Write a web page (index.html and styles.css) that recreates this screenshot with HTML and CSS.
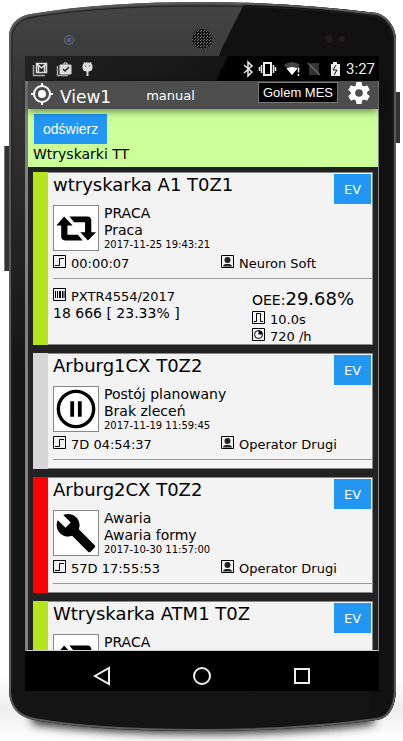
FILE: index.html
```html
<!DOCTYPE html>
<html lang="pl">
<head>
    <meta charset="UTF-8">
    <meta name="viewport" content="width=device-width, initial-scale=1.0">
    <title>Golem MES - View1</title>
    <link rel="stylesheet" href="styles.css">
</head>
<body>
    <!-- shared icons -->
    <svg class="defs" aria-hidden="true">
        <symbol id="repeat" viewBox="0 0 44 44">
            <path d="M9.500 10 L1.500 19.500 H6.500 V31 Q6.500 35 10.500 35 H29 L24 29 H13 V19.500 H18.500 Z"/>
            <path d="M34.500 35 L43 26.500 H38 V14 Q38 10 34 10 H15 L20 16 H31.500 V26.500 H26.500 Z"/>
        </symbol>
        <symbol id="pause" viewBox="0 0 44 44">
            <circle cx="22" cy="22" r="18.500" fill="none" stroke="#000" stroke-width="3.500"/>
            <path d="M16 14h4v16h-4zM24 14h4v16h-4z"/>
        </symbol>
        <symbol id="wrench" viewBox="0 0 24 24">
            <path d="M22.700 19l-9.100-9.100c.9-2.300.4-5-1.500-6.900-2-2-5-2.400-7.400-1.300L9 6 6 9 1.600 4.700C.4 7.100.9 10.100 2.900 12.100c1.900 1.900 4.600 2.400 6.900 1.500l9.100 9.100c.4.400 1 .4 1.400 0l2.300-2.300c.5-.4.5-1.100.1-1.400z"/>
        </symbol>
        <symbol id="step" viewBox="0 0 13 13">
            <path d="M.5.5h12v12H.5zM2 10.500h4.500v-7H11" fill="none" stroke="#000"/>
        </symbol>
        <symbol id="user" viewBox="0 0 13 13">
            <path d="M.5.5h12v12H.5z" fill="none" stroke="#000"/>
            <circle cx="6.500" cy="5" r="3" fill="#222"/>
            <path d="M2 11.500c0-2 2-2.500 4.500-2.500s4.500.5 4.500 2.500z" fill="#222"/>
        </symbol>
        <symbol id="barcode" viewBox="0 0 13 13">
            <path d="M.5.5h12v12H.5z" fill="none" stroke="#000"/>
            <path d="M2 3h1v7H2zM4 3h1v7H4zM6 3h2v7H6zM9 3h1v7H9zM10.500 3h1v7h-1z"/>
        </symbol>
        <symbol id="pulse" viewBox="0 0 13 13">
            <path d="M.5.5h12v12H.5zM2 10.500h2.500v-8h4v8H11" fill="none" stroke="#000"/>
        </symbol>
        <symbol id="clock" viewBox="0 0 13 13">
            <path d="M.5.5h12v12H.5z" fill="none" stroke="#000"/>
            <circle cx="6.500" cy="6.500" r="4" fill="none" stroke="#000"/>
            <path d="M6.500 6.500V2.500a4 4 0 0 1 4 4z"/>
        </symbol>
    </svg>

    <div class="phone">
        <svg class="case" viewBox="0 0 403 741" preserveAspectRatio="none" aria-hidden="true">
            <defs>
                <linearGradient id="body" x1="0" y1="0" x2="0" y2="1">
                    <stop offset="0" stop-color="#454545"/>
                    <stop offset="0.1" stop-color="#383838"/>
                    <stop offset="0.3" stop-color="#252525"/>
                    <stop offset="0.5" stop-color="#151515"/>
                    <stop offset="1" stop-color="#141414"/>
                </linearGradient>
                <linearGradient id="side" x1="0" y1="0" x2="0" y2="1">
                    <stop offset="0" stop-color="#fff"/>
                    <stop offset="0.5" stop-color="#eee"/>
                    <stop offset="1" stop-color="#fff"/>
                </linearGradient>
                <filter id="soft" x="-10%" y="-50%" width="120%" height="200%">
                    <feGaussianBlur stdDeviation="5"/>
                </filter>
                <pattern id="mesh" width="3" height="3" patternUnits="userSpaceOnUse">
                    <path d="M0 0h3v3H0z" fill="#151515"/>
                    <path d="M0 0h1v1H0zM2 1h1v1H2z" fill="#777"/>
                </pattern>
                <clipPath id="outline">
                    <path d="M9 37 C9 22 22 15 31 14 C85 5 140 2 202 2 C262 2 318 6 377 13 C387 16 396 27 396 40 V690 C395 711 387 719 376 720 C318 728 262 731 202 731 C140 731 85 729 34 720 C18 717 9 706 9 690 Z"/>
                </clipPath>
            </defs>
            <path d="M0 676h403v65H0z" fill="url(#side)"/>
            <path d="M32 700H374V724Q300 734 202 734T32 724z" fill="#333" filter="url(#soft)"/>
            <path d="M4 146h6v125H4zM395 92h5v51h-5z" fill="#333"/>
            <path d="M4 146h1v125H4z" fill="#777"/>
            <g clip-path="url(#outline)">
                <path d="M0 0h403v741H0z" fill="url(#body)"/>
                <path d="M246 0H403V741H370V300L378 81H211L221 50z" fill="#111"/>
            </g>
            <path d="M10 690V37 C10 23 22 16 31 15 C85 6 140 3 202 3 C262 3 318 7 377 14 C387 17 395 28 395 40 V690 C394 710 387 718 376 719 C318 727 262 730 202 730 C140 730 85 728 34 719 C18 716 10 706 10 690Z" fill="none" stroke="#5a5a5a" stroke-width="2"/>
            <path d="M12 690V37 C12 26 22 19 33 17 C85 9 140 6 202 6 C262 6 318 9 375 16 C386 19 393 30 393 40 V690" fill="none" stroke="#222"/>
            <circle cx="69" cy="40" r="5" fill="#666"/>
            <circle cx="69" cy="40" r="4" fill="#444450"/>
            <circle cx="69" cy="40" r="2" fill="#5558a0"/>
            <circle cx="202" cy="39" r="10" fill="url(#mesh)"/>
            <circle cx="329" cy="39" r="4" fill="#211b1d"/>
            <circle cx="342" cy="39" r="3" fill="#241a1d"/>
        </svg>

        <div class="statusbar">
            <svg width="70" height="24" viewBox="0 0 70 24" fill="none" stroke="#ddd" aria-hidden="true">
                <path d="M1.500 8v10.500H13" stroke="#aaa" stroke-width="1.500"/>
                <path d="M4.500 6.500h10v9h-10zM5 7l4.500 4L14 7M6.500 15V9M12.500 15V9" stroke-width="1.500"/>
                <path d="M25.500 9v9.500H36" stroke="#aaa" stroke-width="1.500"/>
                <path d="M28 8h11v9H28z" fill="#ddd"/>
                <path d="M32 8V6h3v2"/>
                <path d="M31 12l2 2 4-4" stroke="#222" stroke-width="1.500"/>
                <path d="M51 9q0-3 3-3h3q3 0 3 3v2q0 3-3 3h-3q-3 0-3-3z" fill="#ddd"/>
                <path d="M52 5l1 2M59 5l-1 2"/>
                <path d="M55.500 14v5" stroke-width="2"/>
                <path d="M53 9h1M57 9h1" stroke="#222"/>
            </svg>
            <svg class="status-right" width="98" height="24" viewBox="0 0 98 24" fill="none" stroke="#eee" aria-hidden="true">
                <path d="M1 8l8 7-4 4V5l4 4-8 7" stroke-width="1.500"/>
                <path d="M21 6h7v12h-7z" stroke-width="2"/>
                <path d="M18.500 8v8M16.500 10v4M30.500 8v8M32.500 10v4" stroke-width="1.500"/>
                <path d="M41 8q8-6 16 0l-8 10z" fill="#444" stroke="none"/>
                <path d="M43.500 11.500q5.500-3 11 0L49 18z" fill="#fff" stroke="none"/>
                <path d="M55.500 10.500v5M55.500 17v2" stroke-width="1.500"/>
                <path d="M68 6h8v12H66V9z" fill="#333" stroke="none"/>
                <path d="M65 6l12 12" stroke="#666" stroke-width="1.500"/>
                <path d="M88 7h2V5h4v2h3v12h-9z" fill="#eee" stroke="none"/>
                <path d="M93 8l-3 5h4l-3 5" stroke="#111"/>
            </svg>
            <span class="time">3:27</span>
        </div>

        <div class="app">
            <div class="topbar">
                <svg width="24" height="24" viewBox="0 0 24 24" aria-hidden="true">
                    <circle cx="12" cy="13" r="8" fill="none" stroke="#fff" stroke-width="2"/>
                    <circle cx="12" cy="13" r="4" fill="#fff"/>
                    <path d="M12 2v4M12 20v4M1 13h4M19 13h4" stroke="#fff" stroke-width="2"/>
                </svg>
                <h1>View1</h1>
                <span class="mode">manual</span>
                <span class="brand">Golem MES</span>
                <button class="settings" aria-label="Ustawienia">
                    <svg width="24" height="24" viewBox="1 1 22 22" fill="#fff" aria-hidden="true">
                        <path d="M19.430 12.980c.04-.32.070-.64.070-.98s-.03-.66-.07-.98l2.110-1.650c.19-.15.240-.42.120-.64l-2-3.460c-.12-.22-.39-.3-.61-.22l-2.490 1c-.52-.4-1.080-.73-1.690-.98l-.38-2.650C14.460 2.180 14.250 2 14 2h-4c-.25 0-.46.180-.49.420l-.38 2.650c-.61.250-1.170.590-1.690.980l-2.490-1c-.23-.09-.49 0-.61.220l-2 3.460c-.13.220-.07.490.120.640l2.110 1.650c-.04.320-.07.650-.07.980s.03.660.070.980l-2.110 1.650c-.19.150-.24.420-.12.640l2 3.460c.12.220.390.300.610.220l2.490-1c.52.400 1.080.730 1.690.980l.38 2.650c.03.240.240.420.490.420h4c.25 0 .46-.18.490-.42l.38-2.650c.61-.25 1.170-.59 1.690-.98l2.490 1c.23.090.490 0 .610-.22l2-3.460c.12-.22.070-.49-.12-.64l-2.110-1.650zM12 15.500a3.500 3.500 0 1 1 0-7 3.500 3.500 0 0 1 0 7z"/>
                    </svg>
                </button>
            </div>

            <div class="group">
                <button class="btn refresh">odświerz</button>
                <div>Wtryskarki TT</div>
            </div>

            <div class="list">
                <div class="card work">
                    <button class="btn ev">EV</button>
                    <h2>wtryskarka A1 T0Z1</h2>
                    <div class="state">
                        <svg class="state-icon"><use href="#repeat"/></svg>
                        <div>
                            <div>PRACA</div>
                            <div>Praca</div>
                            <div class="date">2017-11-25 19:43:21</div>
                        </div>
                    </div>
                    <div class="row">
                        <div><svg class="icon"><use href="#step"/></svg>00:00:07</div>
                        <div><svg class="icon"><use href="#user"/></svg>Neuron Soft</div>
                    </div>
                    <div class="details">
                        <div>
                            <div><svg class="icon"><use href="#barcode"/></svg>PXTR4554/2017</div>
                            <div class="count">18 666 [ 23.33% ]</div>
                        </div>
                        <div>
                            <div class="oee">OEE:<span>29.68%</span></div>
                            <div><svg class="icon"><use href="#pulse"/></svg>10.0s</div>
                            <div><svg class="icon"><use href="#clock"/></svg>720 /h</div>
                        </div>
                    </div>
                </div>

                <div class="card planned">
                    <button class="btn ev">EV</button>
                    <h2>Arburg1CX T0Z2</h2>
                    <div class="state">
                        <svg class="state-icon"><use href="#pause"/></svg>
                        <div>
                            <div>Postój planowany</div>
                            <div>Brak zleceń</div>
                            <div class="date">2017-11-19 11:59:45</div>
                        </div>
                    </div>
                    <div class="row">
                        <div><svg class="icon"><use href="#step"/></svg>7D 04:54:37</div>
                        <div><svg class="icon"><use href="#user"/></svg>Operator Drugi</div>
                    </div>
                </div>

                <div class="card failure">
                    <button class="btn ev">EV</button>
                    <h2>Arburg2CX T0Z2</h2>
                    <div class="state">
                        <svg class="state-icon"><use href="#wrench"/></svg>
                        <div>
                            <div>Awaria</div>
                            <div>Awaria formy</div>
                            <div class="date">2017-10-30 11:57:00</div>
                        </div>
                    </div>
                    <div class="row">
                        <div><svg class="icon"><use href="#step"/></svg>57D 17:55:53</div>
                        <div><svg class="icon"><use href="#user"/></svg>Operator Drugi</div>
                    </div>
                </div>

                <div class="card work">
                    <button class="btn ev">EV</button>
                    <h2>Wtryskarka ATM1 T0Z</h2>
                    <div class="state">
                        <svg class="state-icon"><use href="#repeat"/></svg>
                        <div>
                            <div>PRACA</div>
                        </div>
                    </div>
                </div>
            </div>
        </div>

        <div class="navbar">
            <button aria-label="Wstecz">
                <svg width="20" height="20" viewBox="0 0 20 20"><path d="M17 2v16L3 10z"/></svg>
            </button>
            <button aria-label="Start">
                <svg width="20" height="20" viewBox="0 0 20 20"><circle cx="10" cy="10" r="8"/></svg>
            </button>
            <button aria-label="Ostatnie">
                <svg width="20" height="20" viewBox="0 0 20 20"><path d="M3 3h14v14H3z"/></svg>
            </button>
        </div>
    </div>
</body>
</html>
```

FILE: styles.css
```css
* {
    box-sizing: border-box;
}
body {
    margin: 0;
    background: #fff;
    font-family: "DejaVu Sans", Verdana, sans-serif;
    font-size: 13px;
    line-height: 17px;
    color: #000;
}
svg {
    display: block;
    flex: none;
}
button {
    margin: 0;
    padding: 0;
    border: 0;
    background: none;
    cursor: pointer;
}
.defs {
    position: absolute;
    width: 0;
    height: 0;
}

/* phone */
.phone {
    position: relative;
    display: flex;
    flex-direction: column;
    height: 100vh;
    padding: 56px 24px 50px 25px;
}
.case {
    position: absolute;
    top: 0;
    left: 0;
    width: 100%;
    height: 100%;
    z-index: -1;
}
.statusbar {
    display: flex;
    align-items: center;
    flex: none;
    height: 25px;
    padding: 0 4px 0 7px;
    background: linear-gradient(115deg, #222, #161616 55%, #000 56%);
    color: #eee;
}
.status-right {
    margin-left: auto;
    margin-right: 5px;
}
.time {
    padding-top: 2px;
    font-family: Roboto, sans-serif;
    font-size: 15px;
}

/* application */
.app {
    flex: 1;
    min-height: 0;
    display: flex;
    flex-direction: column;
    border-left: 3px solid #808080;
    border-right: 1px solid #808080;
    border-bottom: 1px solid #ccc;
    background: #222;
}
.topbar {
    position: relative;
    display: flex;
    align-items: flex-start;
    flex: none;
    height: 28px;
    padding: 0 7px 0 2px;
    background: #4d4d4d;
    color: #fff;
    box-shadow: 0 2px 8px rgba(0, 0, 0, 0.5);
}
.topbar h1 {
    margin: 0 0 0 6px;
    font-size: 17px;
    font-weight: normal;
    line-height: 32px;
}
.mode {
    margin-left: 35px;
    line-height: 30px;
}
.brand {
    margin: 1px 9px 0 auto;
    padding: 0 4px;
    border: 1px solid #777;
    background: #000;
    font-family: "Liberation Sans", Arial, sans-serif;
    line-height: 19px;
}
.group {
    flex: none;
    padding: 5px 5px 4px;
    background: #cf9;
}
.group div {
    margin-top: 2px;
    font-size: 14px;
}
.btn {
    display: block;
    height: 30px;
    background: #2196f3;
    color: #fff;
    font-family: "Liberation Sans", Arial, sans-serif;
    font-size: 14px;
}
.refresh {
    margin-left: 1px;
    padding: 0 9px;
}
.list {
    flex: 1;
    min-height: 0;
    overflow: hidden;
    padding: 5px 5px 0;
    display: flex;
    flex-direction: column;
    gap: 8px;
}

/* machine */
.card {
    position: relative;
    flex: none;
    padding: 1px 0 9px 5px;
    border-left: 15px solid #d6d6d6;
    background: #f3f3f3;
    box-shadow: inset -1px 0 #888, inset 0 1px #888, inset 0 -1px #888;
}
.work {
    border-left-color: #b5e61d;
}
.failure {
    border-left-color: #f00;
}
.ev {
    position: absolute;
    top: 2px;
    right: 2px;
    width: 37px;
    font-family: "DejaVu Sans", Verdana, sans-serif;
    font-size: 13px;
}
.card h2 {
    margin: 0 0 8px;
    font-size: 18px;
    font-weight: normal;
    line-height: 24px;
}
.state {
    display: flex;
    gap: 5px;
    height: 46px;
    font-size: 14px;
}
.state-icon {
    width: 46px;
    height: 46px;
    padding: 1px;
    border: 1px solid #888;
    background: #fff;
}
.date {
    font-size: 10px;
    line-height: 12px;
}
.row {
    display: grid;
    grid-template-columns: 1fr 152px;
    padding: 4px 0 6px;
    border-bottom: 1px solid #999;
}
.icon {
    display: inline-block;
    width: 13px;
    height: 13px;
    margin-right: 5px;
}
.details {
    display: grid;
    grid-template-columns: 1fr 121px;
    padding-top: 9px;
    margin-bottom: -9px;
}
.count,
.oee {
    font-size: 14px;
}
.oee {
    line-height: 21px;
}
.oee span {
    font-size: 18px;
}

/* android buttons */
.navbar {
    display: flex;
    justify-content: center;
    align-items: center;
    gap: 80px;
    flex: none;
    height: 40px;
    padding: 9px 0 0;
    background: #000;
}
.navbar svg {
    fill: none;
    stroke: #eee;
    stroke-width: 2;
}
```
